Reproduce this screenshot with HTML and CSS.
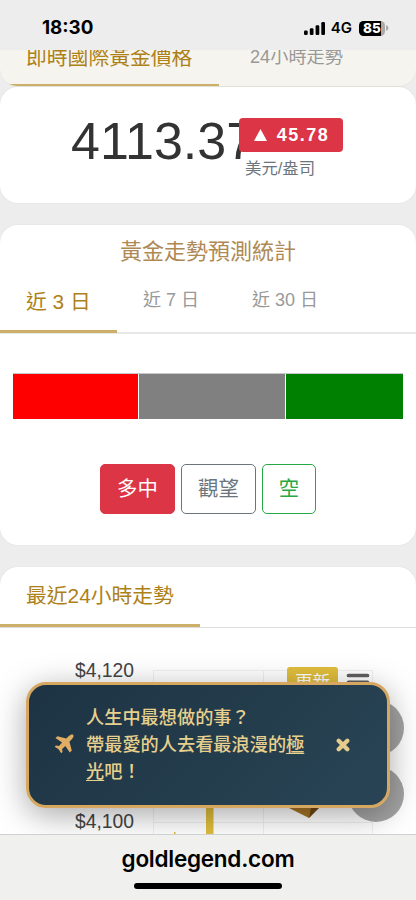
FILE: index.html
```html
<!DOCTYPE html>
<html lang="zh-Hant">
<head>
<meta charset="utf-8">
<meta name="viewport" content="width=device-width, initial-scale=1">
<title>goldlegend.com</title>
<link rel="stylesheet" href="styles.css">
</head>
<body>
<div class="screen">
  <header class="status">
    <span class="clock">18:30</span>
    <div class="indicators">
      <svg class="signal" width="22" height="13" viewBox="0 0 22 13"><rect x="0" y="8.5" width="3.7" height="4.5" rx="1.2"/><rect x="5.8" y="6.3" width="3.7" height="6.7" rx="1.2"/><rect x="11.6" y="3.2" width="3.7" height="9.8" rx="1.2"/><rect x="17.3" y="0" width="3.7" height="13" rx="1.2"/></svg>
      <span class="network">4G</span>
      <span class="battery">85</span>
      <svg class="battery-cap" width="3" height="6" viewBox="0 0 3 6"><path d="M0 0Q2.5 1 2.5 3Q2.5 5 0 6Z" fill="#aaa"/></svg>
    </div>
  </header>
  <main class="page">
    <nav class="top-tabs">
      <a class="tab active">即時國際黃金價格</a>
      <a class="tab">24小時走勢</a>
    </nav>
    <section class="card price-card">
      <div class="price">4113.37</div>
      <div class="change">
        <span class="badge"><svg width="13" height="12" viewBox="0 0 13 12"><path d="M6.5 0L13 12H0Z" fill="#fff"/></svg>45.78</span>
        <span class="unit">美元/盎司</span>
      </div>
    </section>
    <section class="card forecast-card">
      <h2>黃金走勢預測統計</h2>
      <nav class="range-tabs">
        <a class="tab active">近 3 日</a>
        <a class="tab">近 7 日</a>
        <a class="tab">近 30 日</a>
      </nav>
      <div class="ratio"><i class="long"></i><i class="flat"></i><i class="short"></i></div>
      <div class="votes">
        <button class="vote long-vote">多中</button>
        <button class="vote flat-vote">觀望</button>
        <button class="vote short-vote">空</button>
      </div>
    </section>
    <section class="card chart-card">
      <nav class="chart-tabs"><a class="tab active">最近24小時走勢</a></nav>
      <div class="chart">
        <div class="axis"><span>$4,120</span><span>$4,100</span></div>
        <svg class="plot" width="282" height="206" viewBox="0 0 282 206">
          <path d="M19.5 206V42.5M129.5 206V42.5M238.5 206V42.5M19 42.5H239M19 194.5H239" fill="none" stroke="#f0f0f0"/>
          <path d="M72 140H79.5V206H72Z" fill="#dfbd3c"/>
          <path d="M40 204H41.5V206H40Z" fill="#dfbd3c"/>
          <path d="M149 177H187L175 190Z" fill="#a87525"/><path d="M175 190L177 180H185Z" fill="#704812"/>
        </svg>
        <div class="tools"><span class="refresh">更新</span><svg width="24" height="20" viewBox="0 0 24 20"><path d="M2.5 2.5H21.5M2.5 9.3H21.5M2.5 16H21.5" stroke="#5f5f5f" stroke-width="3.7" stroke-linecap="round"/></svg></div>
      </div>
    </section>
  </main>
  <div class="scroll-buttons">
    <span><svg width="30" height="20" viewBox="0 0 30 20"><path d="M2 16L15 5L28 16" fill="none" stroke="#ddd" stroke-width="3"/></svg></span>
    <span><svg width="30" height="20" viewBox="0 0 30 20"><path d="M2 4L15 15L28 4" fill="none" stroke="#ddd" stroke-width="3"/></svg></span>
  </div>
  <aside class="toast">
    <svg class="plane" width="20" height="20" viewBox="0 0 20 20"><path d="M19.2.8C18 0 16.1.8 14.9 2L12.2 4.6L3.5 2.2L1.4 4.1L8.1 8.6L5 11.9L1.9 11.5L.7 12.8L4.6 15.3L7.2 19.3L8.5 18.1L8.1 15L11.4 11.9L15.8 18.6L17.8 16.5L15.4 7.8L18 5.1C19.2 3.9 20 2 19.2.8Z" fill="#e0ad63"/></svg>
    <p>人生中最想做的事？<br>帶最愛的人去看最浪漫的<a>極光</a>吧！</p>
    <svg class="close" width="14" height="14" viewBox="0 0 14 14"><path d="M2.7 2.7L11.3 11.3M11.3 2.7L2.7 11.3" stroke="#e5cb8c" stroke-width="4.3" stroke-linecap="round"/></svg>
  </aside>
  <footer class="browser-bar">
    <span class="address">goldlegend.com</span>
    <span class="home"></span>
  </footer>
</div>
</body>
</html>
```
FILE: styles.css
```css
* { box-sizing: border-box; }
body { margin: 0; font-family: "Liberation Sans", "Noto Sans CJK TC", sans-serif; color: #333; }
.screen { position: relative; width: 416px; height: 900px; display: flex; flex-direction: column; overflow: hidden; background: #ededed; }
.status { flex: none; height: 50px; display: flex; justify-content: space-between; align-items: center; padding: 6px 27px 0 42px; font-family: Inter, sans-serif; color: #000; }
.clock { font-size: 18.8px; font-weight: 700; line-height: 24px; }
.indicators { display: flex; align-items: center; }
.network { margin: 0 7px 0 5px; font-size: 15px; font-weight: 600; line-height: 20px; }
.battery { width: 26px; height: 15px; border-radius: 4.5px; background: linear-gradient(90deg, #000 85%, #aaa 85%); color: #fff; font-size: 13.5px; font-weight: 800; line-height: 15px; text-align: center; }
.battery-cap { margin-left: 1px; }
.page { flex: 1; min-height: 0; overflow: hidden; }
.tab { color: #999; font-size: 18px; line-height: 26px; white-space: nowrap; }
.tab.active { color: #ad8118; font-size: 20.8px; }
.top-tabs { height: 37px; display: flex; background: #f5f4ef; border-bottom: 1px solid #e6e3db; border-radius: 0 0 18px 18px; overflow: hidden; }
.top-tabs .tab { height: 37px; line-height: 15px; padding-left: 31px; font-size: 18.2px; }
.top-tabs .active { width: 219px; padding-left: 26px; border-bottom: 3px solid #ccb06a; font-size: 20.8px; }
.card { background: #fff; border-radius: 18px; box-shadow: 0 0 2px rgba(0,0,0,.07); }
.price-card { height: 116px; margin: 0 0 22px; display: flex; padding: 31px 0 0 71px; }
.price { width: 168px; font-size: 52px; line-height: 46px; color: #333; white-space: nowrap; }
.change { z-index: 1; display: flex; flex-direction: column; align-items: flex-start; }
.badge { width: 104px; height: 34px; border-radius: 4px; background: #dc3545; color: #fff; display: flex; align-items: center; justify-content: center; gap: 10px; padding-left: 1px; font-size: 18px; font-weight: 700; letter-spacing: 1.5px; }
.unit { margin-left: 6px; font-size: 16.4px; line-height: 33px; color: #6c757d; }
.forecast-card { height: 320px; margin-bottom: 22px; overflow: hidden; }
.forecast-card h2 { margin: 0; padding-top: 11px; font-size: 22px; line-height: 32px; font-weight: 400; text-align: center; color: #af8954; }
.range-tabs { height: 66px; display: flex; border-bottom: 2px solid #e8e8e8; }
.range-tabs .tab { padding: 19px 0 0 26px; margin-right: 27px; }
.range-tabs .active { width: 117px; height: 65px; margin-right: 0; padding-top: 21px; border-bottom: 3px solid #ccb06a; }
.ratio { height: 46px; margin: 39px 13px 0; display: grid; grid-template-columns: 125px 146px 117px; gap: 1px; border-top: 1px solid #c8c8c8; }
.long { background: red; }
.flat { background: gray; }
.short { background: green; }
.votes { margin-top: 45px; display: flex; justify-content: center; gap: 6px; }
.vote { height: 50px; padding: 0; border: 1.5px solid; border-radius: 5px; background: #fff; font: 400 20.4px/46px "Liberation Sans", "Noto Sans CJK TC", sans-serif; }
.long-vote { width: 75px; background: #dc3545; border-color: #dc3545; color: #fff; }
.flat-vote { width: 75px; color: #6c757d; }
.short-vote { width: 54px; color: #28a745; }
.chart-card { height: 290px; }
.chart-tabs { height: 61px; border-bottom: 1px solid #ddd; display: flex; }
.chart-tabs .tab { width: 200px; height: 60px; padding: 16px 0 0 26px; border-bottom: 3px solid #ccb06a; }
.chart { position: relative; height: 206px; display: flex; }
.axis { width: 134px; padding-top: 31px; display: flex; flex-direction: column; gap: 127px; text-align: right; font-size: 19.3px; line-height: 24px; color: #444; }
.tools { position: absolute; left: 287px; top: 39px; display: flex; gap: 8px; align-items: flex-start; }
.tools svg { margin-top: 6px; }
.refresh { width: 51px; height: 34px; border-radius: 3px; background: #dfbd3c; color: #fff; font-size: 17.5px; line-height: 31px; text-align: center; }
.scroll-buttons { position: absolute; left: 348px; top: 700px; display: flex; flex-direction: column; gap: 10px; }
.scroll-buttons span { width: 56px; height: 56px; border-radius: 50%; background: #a4a4a4; display: flex; align-items: center; justify-content: center; }
.toast { position: absolute; left: 26px; top: 682px; width: 364px; height: 126px; display: flex; align-items: center; padding: 0 39px 0 25px; border: 3px solid #d5a761; border-radius: 20px; background: linear-gradient(135deg, #1d3343, #294555); box-shadow: 0 7px 32px rgba(0,0,0,.35); color: #e7d08d; }
.plane { flex: none; margin: -3px 12px 0 0; }
.toast p { margin: 1px 31px 0 0; width: 219px; flex: none; font-size: 18.2px; font-weight: 500; line-height: 27px; }
.close { flex: none; }
.toast a { text-decoration: underline; text-underline-offset: 2px; }
.browser-bar { position: relative; flex: none; height: 66px; display: flex; flex-direction: column; align-items: center; background: #f0f0ee; border-top: 1px solid #d0d0d0; color: #000; }
.address { margin-top: 10px; font: 600 22.5px/28px Inter, sans-serif; letter-spacing: -.25px; }
.home { width: 148px; height: 6px; margin-top: 10px; border-radius: 3px; background: #000; }
```
